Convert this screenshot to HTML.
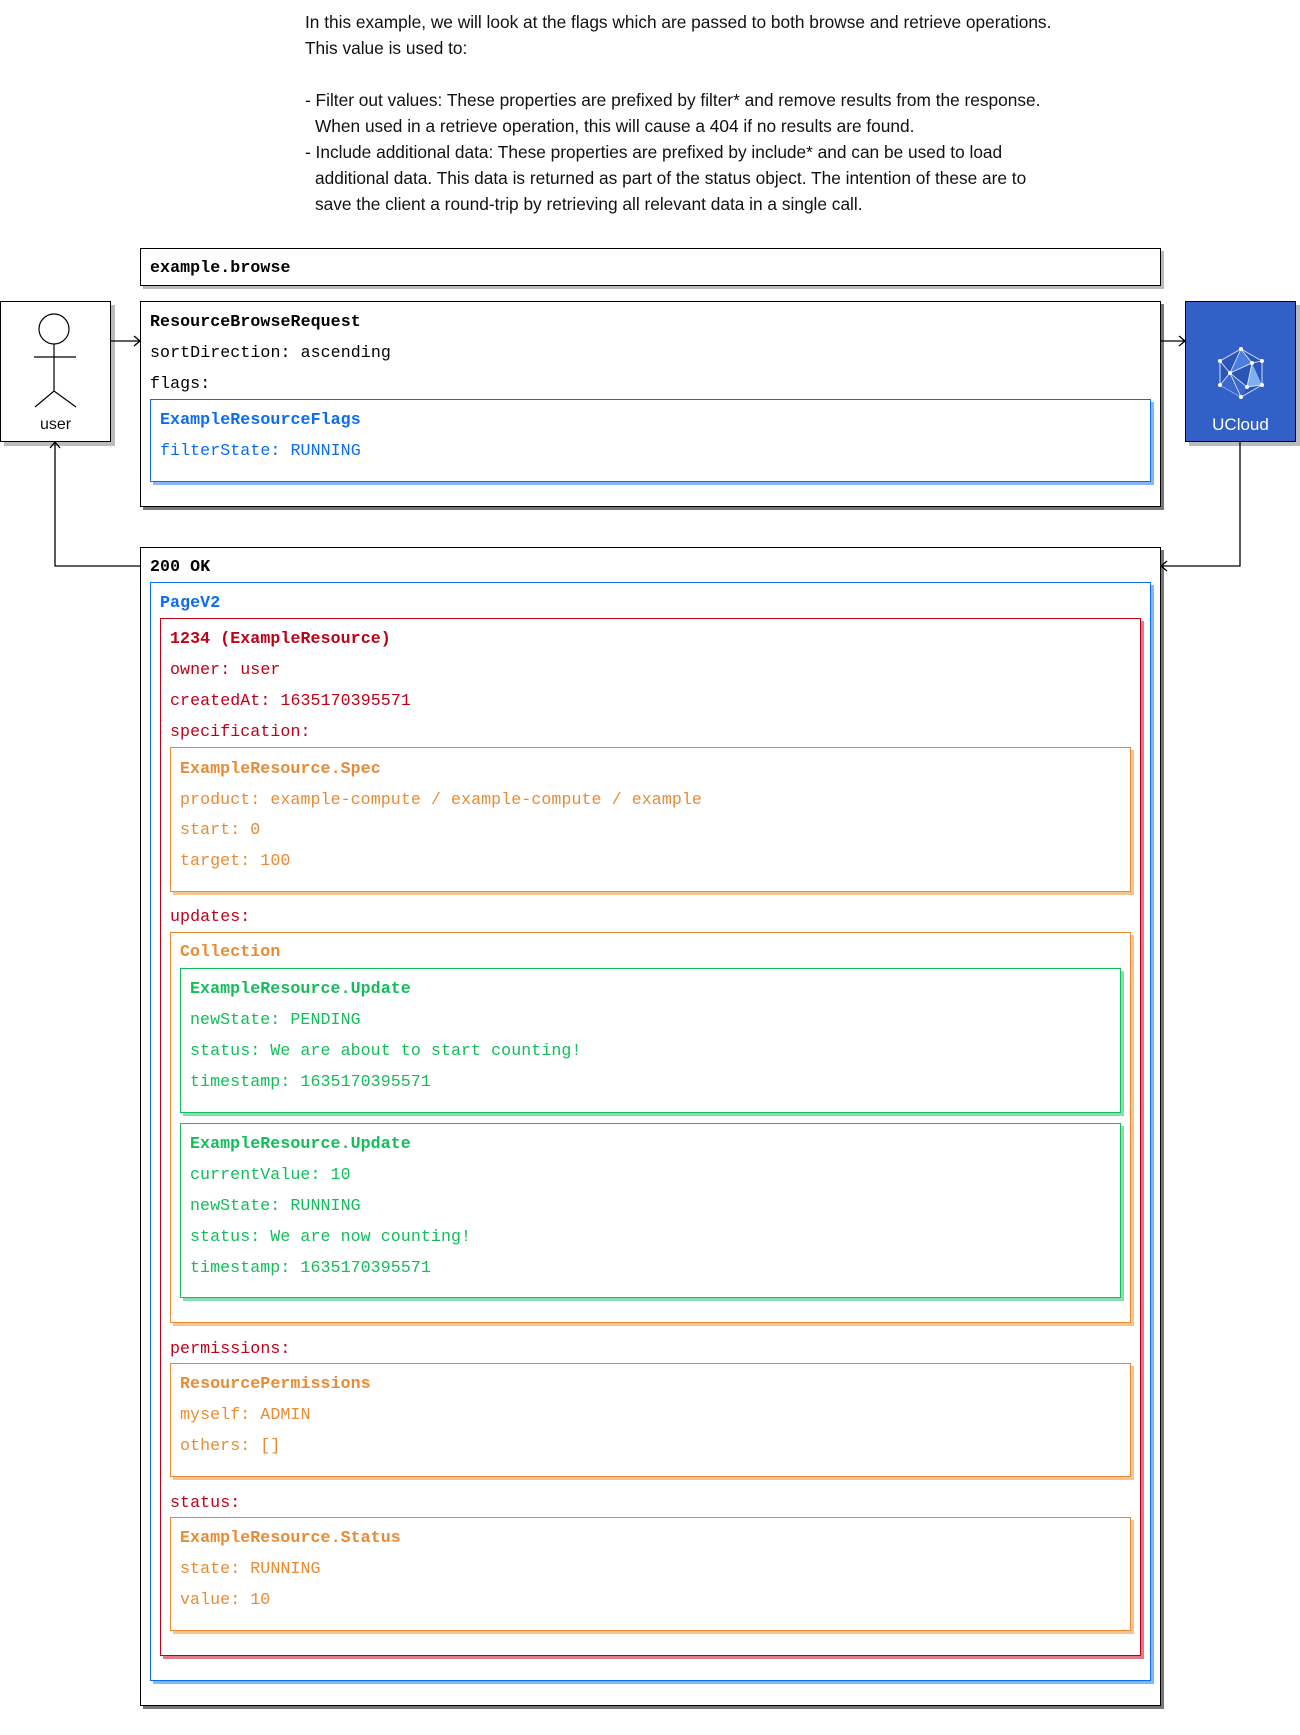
<!DOCTYPE html>
<html><head><meta charset="utf-8"><style>
body{margin:0;width:1300px;height:1735px;background:#fff;position:relative;overflow:hidden;font-family:"Liberation Mono",monospace;}
.b{position:absolute;box-sizing:border-box;border:1px solid #000;background:#fff}
.t{position:absolute;font-size:16.6px;letter-spacing:0.08px;line-height:31px;white-space:pre;font-family:"Liberation Mono",monospace}
.s{position:absolute;font-family:"Liberation Sans",sans-serif;font-size:17.3px;line-height:26px;white-space:pre;color:#111}
.bold{font-weight:bold}
.k{color:#000}.bl{color:#0b6cf0}.rd{color:#c0001b}.or{color:#e88b33}.gr{color:#12bd5a}
</style></head><body>
<div class="s" style="left:305px;top:9px">In this example, we will look at the flags which are passed to both browse and retrieve operations.</div>
<div class="s" style="left:305px;top:35px">This value is used to:</div>
<div class="s" style="left:305px;top:87px">- Filter out values: These properties are prefixed by filter* and remove results from the response.</div>
<div class="s" style="left:315px;top:113px">When used in a retrieve operation, this will cause a 404 if no results are found.</div>
<div class="s" style="left:305px;top:139px">- Include additional data: These properties are prefixed by include* and can be used to load</div>
<div class="s" style="left:315px;top:165px">additional data. This data is returned as part of the status object. The intention of these are to</div>
<div class="s" style="left:315px;top:191px">save the client a round-trip by retrieving all relevant data in a single call.</div>

<!-- user -->
<div class="b" style="left:0;top:301px;width:111px;height:141px;box-shadow:4px 4px 0 #bbb"></div>
<svg style="position:absolute;left:0;top:301px" width="111" height="141"><g stroke="#000" fill="none" stroke-width="1.2">
<circle cx="54" cy="28" r="15"/><line x1="54" y1="43" x2="54" y2="90"/><line x1="34" y1="56" x2="76" y2="56"/>
<polyline points="35,106 54,90 76,106"/></g></svg>
<div class="s" style="left:0;width:111px;text-align:center;top:412px;font-size:16px">user</div>

<!-- UCloud -->
<div class="b" style="left:1185px;top:301px;width:111px;height:141px;background:#3160c6;box-shadow:4px 4px 0 #bbb"></div>
<svg style="position:absolute;left:1210px;top:345px" width="62" height="60" viewBox="0 0 62 60">
<polygon points="31,4 52,16 52,40 31,52 10,40 10,16" fill="#2a56b8" stroke="#cfe0ff" stroke-width="1"/>
<polygon points="31,4 42,18 20,28" fill="#4a7fe0"/><polygon points="42,18 52,40 37,42" fill="#7fb0f5"/>
<polygon points="20,28 37,42 31,52 10,40" fill="#3a68cc"/>
<g stroke="#e6efff" stroke-width="0.8" fill="none"><polyline points="31,4 42,18 52,16"/><polyline points="10,16 20,28 42,18 37,42 20,28 31,52"/><polyline points="37,42 52,40"/><polyline points="20,28 10,40"/><line x1="31" y1="4" x2="20" y2="28"/></g>
<g fill="#fff"><circle cx="31" cy="4" r="2"/><circle cx="52" cy="16" r="2"/><circle cx="52" cy="40" r="2"/><circle cx="31" cy="52" r="2"/><circle cx="10" cy="40" r="2"/><circle cx="10" cy="16" r="2"/><circle cx="42" cy="18" r="2"/><circle cx="20" cy="28" r="2"/><circle cx="37" cy="42" r="2"/></g></svg>
<div class="s" style="left:1185px;width:111px;text-align:center;top:412px;color:#fff;font-size:17px">UCloud</div>

<!-- example.browse -->
<div class="b" style="left:140px;top:248px;width:1021px;height:38px;box-shadow:3px 3px 0 #bbb"></div>
<div class="t k bold" style="left:150px;top:252px">example.browse</div>

<!-- request -->
<div class="b" style="left:140px;top:301px;width:1021px;height:206px;box-shadow:3px 3px 0 #777"></div>
<div class="t k bold" style="left:150px;top:306px">ResourceBrowseRequest</div>
<div class="t k" style="left:150px;top:337px">sortDirection: ascending</div>
<div class="t k" style="left:150px;top:368px">flags:</div>
<div class="b" style="left:150px;top:399px;width:1001px;height:83px;border-color:#0b6cf0;box-shadow:3px 3px 0 #85b6f7"></div>
<div class="t bl bold" style="left:160px;top:404px">ExampleResourceFlags</div>
<div class="t bl" style="left:160px;top:435px">filterState: RUNNING</div>

<!-- response -->
<div class="b" style="left:140px;top:547px;width:1021px;height:1159px;box-shadow:3px 3px 0 #777"></div>
<div class="t k bold" style="left:150px;top:551px">200 OK</div>
<div class="b" style="left:150px;top:582px;width:1001px;height:1099px;border-color:#0b6cf0;box-shadow:3px 3px 0 #85b6f7"></div>
<div class="t bl bold" style="left:160px;top:587px">PageV2</div>
<div class="b" style="left:160px;top:618px;width:981px;height:1038px;border-color:#c0001b;box-shadow:3px 3px 0 #e07c88"></div>
<div class="t rd bold" style="left:170px;top:623px">1234 (ExampleResource)</div>
<div class="t rd" style="left:170px;top:654px">owner: user</div>
<div class="t rd" style="left:170px;top:685px">createdAt: 1635170395571</div>
<div class="t rd" style="left:170px;top:716px">specification:</div>

<div class="b" style="left:170px;top:747px;width:961px;height:145px;border-color:#e88b33;box-shadow:3px 3px 0 #f6c48f"></div>
<div class="t or bold" style="left:180px;top:753px">ExampleResource.Spec</div>
<div class="t or" style="left:180px;top:784px">product: example-compute / example-compute / example</div>
<div class="t or" style="left:180px;top:814px">start: 0</div>
<div class="t or" style="left:180px;top:845px">target: 100</div>

<div class="t rd" style="left:170px;top:901px">updates:</div>
<div class="b" style="left:170px;top:932px;width:961px;height:391px;border-color:#e88b33;box-shadow:3px 3px 0 #f6c48f"></div>
<div class="t or bold" style="left:180px;top:936px">Collection</div>

<div class="b" style="left:180px;top:968px;width:941px;height:145px;border-color:#12bd5a;box-shadow:3px 3px 0 #86dfae"></div>
<div class="t gr bold" style="left:190px;top:973px">ExampleResource.Update</div>
<div class="t gr" style="left:190px;top:1004px">newState: PENDING</div>
<div class="t gr" style="left:190px;top:1035px">status: We are about to start counting!</div>
<div class="t gr" style="left:190px;top:1066px">timestamp: 1635170395571</div>

<div class="b" style="left:180px;top:1123px;width:941px;height:175px;border-color:#12bd5a;box-shadow:3px 3px 0 #86dfae"></div>
<div class="t gr bold" style="left:190px;top:1128px">ExampleResource.Update</div>
<div class="t gr" style="left:190px;top:1159px">currentValue: 10</div>
<div class="t gr" style="left:190px;top:1190px">newState: RUNNING</div>
<div class="t gr" style="left:190px;top:1221px">status: We are now counting!</div>
<div class="t gr" style="left:190px;top:1252px">timestamp: 1635170395571</div>

<div class="t rd" style="left:170px;top:1333px">permissions:</div>
<div class="b" style="left:170px;top:1363px;width:961px;height:114px;border-color:#e88b33;box-shadow:3px 3px 0 #f6c48f"></div>
<div class="t or bold" style="left:180px;top:1368px">ResourcePermissions</div>
<div class="t or" style="left:180px;top:1399px">myself: ADMIN</div>
<div class="t or" style="left:180px;top:1430px">others: []</div>

<div class="t rd" style="left:170px;top:1487px">status:</div>
<div class="b" style="left:170px;top:1517px;width:961px;height:114px;border-color:#e88b33;box-shadow:3px 3px 0 #f6c48f"></div>
<div class="t or bold" style="left:180px;top:1522px">ExampleResource.Status</div>
<div class="t or" style="left:180px;top:1553px">state: RUNNING</div>
<div class="t or" style="left:180px;top:1584px">value: 10</div>

<svg style="position:absolute;left:0;top:0" width="1300" height="1735">
<g stroke="#000" fill="none" stroke-width="1.3">
<line x1="111" y1="341" x2="140" y2="341"/><polyline points="134,336 140,341 134,346"/>
<line x1="1161" y1="341" x2="1185" y2="341"/><polyline points="1179,336 1185,341 1179,346"/>
<polyline points="140,566 55,566 55,442"/><polyline points="50,448 55,442 60,448"/>
<polyline points="1240,442 1240,566 1161,566"/><polyline points="1167,561 1161,566 1167,571"/>
</g></svg>
</body></html>
